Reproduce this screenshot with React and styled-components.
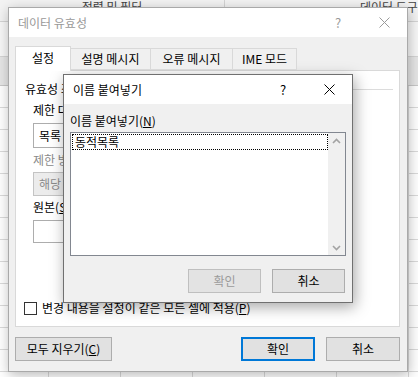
import React from 'react';
import styled, { createGlobalStyle } from 'styled-components';

const GlobalStyle = createGlobalStyle`
  *, *::before, *::after { box-sizing: border-box; }
  html, body { margin: 0; padding: 0; }
  body {
    font-family: "Noto Sans CJK KR", "Malgun Gothic", "Noto Sans", sans-serif;
    font-size: 12px;
    color: #000;
  }
`;

// excel sheet behind the dialogs
const Desktop = styled.div`
  position: relative;
  width: 418px;
  height: 377px;
  overflow: hidden;
  display: flex;
  flex-direction: column;
  background: #fff;
`;

const Ribbon = styled.div`
  height: 22px;
  display: flex;
  background: #f3f3f3;
  border-bottom: 1px solid #d4d4d4;
`;

const RibbonGroup = styled.div`
  width: ${(p) => p.$w}px;
  padding-left: ${(p) => p.$pad || 0}px;
  display: flex;
  justify-content: ${(p) => (p.$pad ? 'flex-start' : 'center')};
  border-right: ${(p) => (p.$sep ? '1px solid #d4d4d4' : 'none')};
`;

const RibbonLabel = styled.span`
  margin-top: 0;
  line-height: 14px;
  color: #444;
  white-space: nowrap;
`;

const FormulaArea = styled.div`
  height: 35px;
  background: #f7f7f7;
  border-bottom: 1px solid #d4d4d4;
`;

const HeaderRow = styled.div`
  height: 29px;
  background: #e6e6e6;
  border-bottom: 1px solid #c8c8c8;
`;

const Grid = styled.div`
  flex: 1;
  background-color: #fff;
  background-image:
    repeating-linear-gradient(to bottom, transparent 0 21px, #dadada 21px 22px),
    repeating-linear-gradient(to right, transparent 0 48px, #dadada 48px 49px, transparent 49px 72px);
`;

// dialog windows
const Dialog = styled.div`
  position: absolute;
  left: ${(p) => p.$x}px;
  top: ${(p) => p.$y}px;
  width: ${(p) => p.$w}px;
  height: ${(p) => (p.$h ? `${p.$h}px` : 'auto')};
  display: flex;
  flex-direction: column;
  background: #f0f0f0;
  border: 1px solid ${(p) => (p.$active ? '#707070' : '#a9a9a9')};
  box-shadow: ${(p) =>
    p.$active ? '2px 4px 14px rgba(0,0,0,0.35)' : '1px 3px 12px rgba(0,0,0,0.28)'};
`;

const TitleBar = styled.div`
  height: 29px;
  flex: none;
  display: flex;
  align-items: center;
  background: #fff;
  color: ${(p) => (p.$active ? '#000' : '#999')};
`;

const TitleText = styled.span`
  flex: 1;
  padding-left: 9px;
  line-height: 14px;
`;

const TitleButton = styled.div`
  width: 46px;
  height: 29px;
  display: flex;
  align-items: center;
  justify-content: center;
  font-size: 13px;
`;

const OuterBody = styled.div`
  flex: 1;
  display: flex;
  flex-direction: column;
  padding: 9px 7px 10px 6px;
`;

const Tabs = styled.div`
  height: 24px;
  display: flex;
  align-items: flex-end;
  position: relative;
  z-index: 1;
`;

const Tab = styled.div`
  width: ${(p) => p.$w}px;
  height: ${(p) => (p.$on ? 25 : 22)}px;
  margin-left: ${(p) => (p.$first ? 0 : -1)}px;
  margin-bottom: ${(p) => (p.$on ? -1 : 0)}px;
  display: flex;
  align-items: center;
  justify-content: center;
  line-height: 14px;
  padding-bottom: ${(p) => (p.$on ? 2 : 0)}px;
  background: ${(p) => (p.$on ? '#fff' : '#f0f0f0')};
  border: 1px solid #d9d9d9;
  border-bottom: ${(p) => (p.$on ? 'none' : '1px solid #d9d9d9')};
`;

const Panel = styled.div`
  flex: 1;
  display: flex;
  flex-direction: column;
  background: #fff;
  border: 1px solid #d9d9d9;
  padding: 11px 6px 11px 17px;
`;

const GroupHeader = styled.div`
  margin-left: -8px;
  display: flex;
  align-items: center;
  line-height: 14px;
  &::after {
    content: '';
    flex: 1;
    height: 1px;
    margin-left: 6px;
    background: #dcdcdc;
  }
`;

const FieldLabel = styled.div`
  margin-top: ${(p) => p.$mt}px;
  line-height: 14px;
  color: ${(p) => (p.$disabled ? '#8a8a8a' : '#000')};
`;

const Box = styled.div`
  margin-top: ${(p) => p.$mt}px;
  width: ${(p) => p.$w}px;
  height: ${(p) => p.$h}px;
  display: flex;
  align-items: center;
  padding-left: 5px;
  line-height: 14px;
  background: ${(p) => (p.$disabled ? '#ececec' : '#fff')};
  color: ${(p) => (p.$disabled ? '#8a8a8a' : '#000')};
  border: 1px solid ${(p) => (p.$disabled ? '#c4c4c4' : '#adadad')};
`;

const CheckRow = styled.label`
  margin-top: auto;
  margin-left: -9px;
  display: flex;
  align-items: center;
  gap: 5px;
  line-height: 14px;
`;

const CheckBox = styled.span`
  width: 13px;
  height: 13px;
  background: #fff;
  border: 1px solid #333;
`;

const ButtonRow = styled.div`
  margin-top: ${(p) => p.$mt || 10}px;
  display: flex;
  gap: 11px;
  justify-content: ${(p) => (p.$end ? 'flex-end' : 'flex-start')};
  padding-right: ${(p) => p.$pr || 0}px;
`;

const Button = styled.div`
  width: ${(p) => p.$w || 74}px;
  height: 24px;
  display: flex;
  align-items: center;
  justify-content: center;
  line-height: 14px;
  background: ${(p) => (p.$disabled ? '#e3e3e3' : '#e1e1e1')};
  color: ${(p) => (p.$disabled ? '#9a9a9a' : '#000')};
  border: ${(p) =>
    p.$default ? '2px solid #0078d7' : `1px solid ${p.$disabled ? '#bfbfbf' : '#adadad'}`};
`;

const Spacer = styled.div`
  flex: 1;
`;

const InnerBody = styled.div`
  display: flex;
  flex-direction: column;
  padding: 10px 6px 9px 6px;
`;

const ListBox = styled.div`
  margin-top: 4px;
  height: 124px;
  display: flex;
  background: #fff;
  border: 1px solid #828790;
`;

const ListItems = styled.div`
  flex: 1;
  padding: 1px 0 1px 1px;
`;

const ListItem = styled.div`
  height: 16px;
  line-height: 14px;
  padding-left: 2px;
  border: 1px dotted #000;
`;

const ScrollBar = styled.div`
  width: 17px;
  display: flex;
  flex-direction: column;
  justify-content: space-between;
  align-items: center;
  padding: 5px 0 4px;
  background: #f0f0f0;
`;

const Close = ({ color }) => (
  <svg width="11" height="11" viewBox="0 0 11 11">
    <path d="M0.5 0.5 L10.5 10.5 M10.5 0.5 L0.5 10.5" stroke={color} strokeWidth="1" fill="none" />
  </svg>
);

const Chevron = ({ down }) => (
  <svg width="9" height="6" viewBox="0 0 9 6">
    <path
      d={down ? 'M1 1 L4.5 4.5 L8 1' : 'M1 5 L4.5 1.5 L8 5'}
      stroke="#a3a3a3"
      strokeWidth="1.6"
      fill="none"
    />
  </svg>
);

const App = () => {
  return (
    <Desktop>
      <GlobalStyle />
      <Ribbon>
        <RibbonGroup $w={225} $sep>
          <RibbonLabel>정렬 및 필터</RibbonLabel>
        </RibbonGroup>
        <RibbonGroup $w={193} $pad={135}>
          <RibbonLabel>데이터 도구</RibbonLabel>
        </RibbonGroup>
      </Ribbon>
      <FormulaArea />
      <HeaderRow />
      <Grid />

      <Dialog $x={8} $y={7} $w={400} $h={365}>
        <TitleBar>
          <TitleText>데이터 유효성</TitleText>
          <TitleButton>?</TitleButton>
          <TitleButton>
            <Close color="#9a9a9a" />
          </TitleButton>
        </TitleBar>
        <OuterBody>
          <Tabs>
            <Tab $w={56} $on $first>설정</Tab>
            <Tab $w={81}>설명 메시지</Tab>
            <Tab $w={83}>오류 메시지</Tab>
            <Tab $w={65}>IME 모드</Tab>
          </Tabs>
          <Panel>
            <GroupHeader>유효성 조건</GroupHeader>
            <FieldLabel $mt={7}>제한 대상(<u>A</u>):</FieldLabel>
            <Box $mt={6} $w={150} $h={25}>목록</Box>
            <FieldLabel $mt={5} $disabled>제한 방법(<u>D</u>):</FieldLabel>
            <Box $mt={5} $w={150} $h={24} $disabled>해당 범위</Box>
            <FieldLabel $mt={4}>원본(<u>S</u>):</FieldLabel>
            <Box $mt={6} $w={300} $h={23} />
            <CheckRow>
              <CheckBox />
              <span>
                변경 내용을 설정이 같은 모든 셀에 적용(<u>P</u>)
              </span>
            </CheckRow>
          </Panel>
          <ButtonRow>
            <Button $w={97}>
              모두 지우기(<u>C</u>)
            </Button>
            <Spacer />
            <Button $default>확인</Button>
            <Button>취소</Button>
          </ButtonRow>
        </OuterBody>
      </Dialog>

      <Dialog $x={63} $y={74} $w={290} $active>
        <TitleBar $active>
          <TitleText>이름 붙여넣기</TitleText>
          <TitleButton>?</TitleButton>
          <TitleButton>
            <Close color="#000" />
          </TitleButton>
        </TitleBar>
        <InnerBody>
          <FieldLabel $mt={0}>
            이름 붙여넣기(<u>N</u>)
          </FieldLabel>
          <ListBox>
            <ListItems>
              <ListItem>동적목록</ListItem>
            </ListItems>
            <ScrollBar>
              <Chevron />
              <Chevron down />
            </ScrollBar>
          </ListBox>
          <ButtonRow $end $pr={1} $mt={13}>
            <Button $w={73} $disabled>확인</Button>
            <Button $w={73}>취소</Button>
          </ButtonRow>
        </InnerBody>
      </Dialog>
    </Desktop>
  );
};

export default App;
